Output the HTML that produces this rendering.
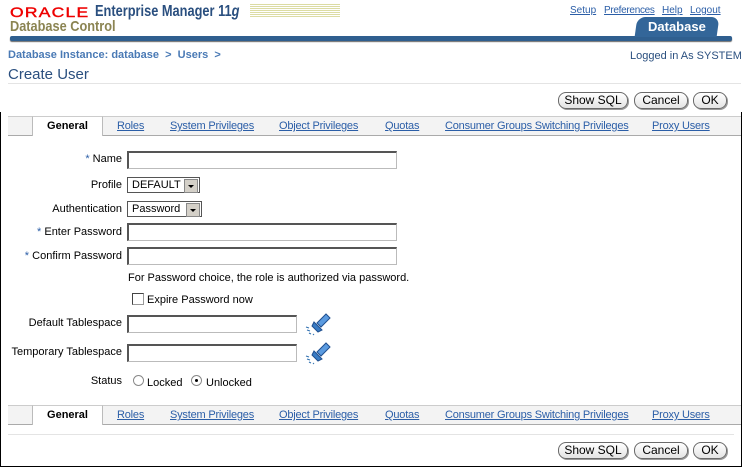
<!DOCTYPE html>
<html><head><style>
body{margin:0;width:742px;height:467px;background:#fff;position:relative;overflow:hidden;font-family:"Liberation Sans",Tahoma,sans-serif;font-size:11px;color:#000}
.a{position:absolute;white-space:nowrap}
.lk{color:#2b5ea7;text-decoration:underline}
.btn{position:absolute;height:15px;border:1px solid #6a6a6a;border-radius:8px;background:linear-gradient(#fff,#e4e4e4);font-size:12px;line-height:15px;text-align:center;box-shadow:1px 1px 0 #999}
.inp{position:absolute;height:15px;border:1px solid #bbb;border-top:2px solid #555;border-left:2px solid #555;background:#fff}
.lab{position:absolute;right:620px;white-space:nowrap;font-size:11px}
.star{color:#2b5ea7}
.tabs{position:absolute;left:8px;width:733px;height:18px;background:#f3f3f3;border-top:1px solid #ccc;border-bottom:1px solid #aaa}
.tabs .g{position:absolute;left:24px;top:-1px;width:69px;height:19px;background:#fff;border-left:1px solid #bbb;border-right:1px solid #bbb;border-top:1px solid #ccc;font-weight:bold;text-align:center;line-height:18px;font-size:11px}
.tabs span.l{position:absolute;top:3px;color:#2b5ea7;text-decoration:underline;font-size:11px;letter-spacing:-0.2px}
.sel{position:absolute;height:14px;border:1px solid #555;background:#fff;font-size:11px;line-height:14px;padding-left:4px}
.sel i{position:absolute;right:1px;top:1px;width:12px;height:12px;background:#d4d0c8;border:1px solid #888}
.sel i:after{content:"";position:absolute;left:3px;top:5px;border-left:3px solid transparent;border-right:3px solid transparent;border-top:3px solid #000}
</style></head><body>
<div class="a" style="left:0;top:112px;width:1px;height:355px;background:#000"></div>
<div class="a" style="left:741px;top:112px;width:1px;height:355px;background:#000"></div>
<div class="a" style="left:0;top:466px;width:742px;height:1px;background:#000"></div>

<div class="a" style="left:10px;top:4px;font-size:14px;color:#e00;letter-spacing:1px;-webkit-text-stroke:0.4px #e00;transform:scaleX(1.25);transform-origin:left">ORACLE</div>
<div class="a" style="left:95px;top:3px;font-size:16px;font-weight:bold;color:#2a4f7f;transform:scaleX(0.8);transform-origin:left">Enterprise Manager 11<i>g</i></div>
<div class="a" style="left:250px;top:4px;width:90px;height:13px;background:repeating-linear-gradient(#d8d89a 0 1px,#fff 1px 2px);opacity:.9"></div>
<div class="a" style="left:10px;top:18px;font-size:15px;font-weight:bold;color:#8b8452;transform:scaleX(0.85);transform-origin:left">Database Control</div>
<div class="a" style="left:10px;top:36px;width:722px;height:5px;background:#2f5f8f;border-radius:2px;box-shadow:0 1px 1px #666"></div>
<div class="a" style="left:636px;top:17px;width:82px;height:20px;background:#336699;border-radius:8px 8px 0 0;transform:skewX(-8deg)"></div>
<div class="a" style="left:648px;top:19px;font-size:13px;font-weight:bold;color:#fff">Database</div>
<div class="a lk" style="left:570px;top:5px;font-size:10px">Setup</div>
<div class="a lk" style="left:604px;top:5px;font-size:10px;letter-spacing:-0.3px">Preferences</div>
<div class="a lk" style="left:662px;top:5px;font-size:10px">Help</div>
<div class="a lk" style="left:690px;top:5px;font-size:10px">Logout</div>

<div class="a" style="left:8px;top:49px;font-weight:bold;color:#4a7ab5">Database Instance: database &nbsp;&gt;&nbsp; Users &nbsp;&gt;</div>
<div class="a" style="left:630px;top:50px;color:#2a4f7f">Logged in As SYSTEM</div>
<div class="a" style="left:8px;top:66px;font-size:15px;color:#2a4f7f">Create User</div>
<div class="a" style="left:8px;top:83px;width:733px;height:1px;background:#e4e4e4"></div>

<div class="btn" style="left:558px;top:92px;width:68px">Show SQL</div>
<div class="btn" style="left:634px;top:92px;width:52px">Cancel</div>
<div class="btn" style="left:693px;top:92px;width:32px">OK</div>

<div class="tabs" style="top:116px"><div class="g">General</div>
<span class="l" style="left:109px">Roles</span><span class="l" style="left:162px">System Privileges</span><span class="l" style="left:271px">Object Privileges</span><span class="l" style="left:377px">Quotas</span><span class="l" style="left:437px">Consumer Groups Switching Privileges</span><span class="l" style="left:644px">Proxy Users</span></div>

<div class="lab" style="top:153px"><span class="star">*</span> Name</div>
<div class="inp" style="left:127px;top:151px;width:267px"></div>
<div class="lab" style="top:179px">Profile</div>
<div class="sel" style="left:127px;top:177px;width:67px">DEFAULT<i></i></div>
<div class="lab" style="top:203px">Authentication</div>
<div class="sel" style="left:127px;top:201px;width:69px">Password<i></i></div>
<div class="lab" style="top:226px"><span class="star">*</span> Enter Password</div>
<div class="inp" style="left:127px;top:223px;width:267px"></div>
<div class="lab" style="top:250px"><span class="star">*</span> Confirm Password</div>
<div class="inp" style="left:127px;top:247px;width:267px"></div>
<div class="a" style="left:128px;top:272px">For Password choice, the role is authorized via password.</div>
<div class="a" style="left:132px;top:293px;width:10px;height:10px;border:1px solid #999;border-top-color:#444;border-left-color:#444;background:#fff"></div>
<div class="a" style="left:147px;top:294px">Expire Password now</div>
<div class="lab" style="top:317px">Default Tablespace</div>
<div class="inp" style="left:127px;top:315px;width:167px"></div>
<div class="lab" style="top:346px">Temporary Tablespace</div>
<div class="inp" style="left:127px;top:344px;width:167px"></div>
<svg class="a" style="left:305px;top:312px" width="26" height="24"><path d="M12 11 L21 2 L25 6 L16 15 Z" fill="#5b9be0" stroke="#1f4f8f"/><path d="M9 10 L17 18 L13 20 L7 14 Z" fill="#3a7cc4" stroke="#1f4f8f"/><path d="M1 15l3 1M2 18l3 1M4 21l2 1M8 22l1 1" stroke="#3070b0"/></svg>
<svg class="a" style="left:305px;top:341px" width="26" height="24"><path d="M12 11 L21 2 L25 6 L16 15 Z" fill="#5b9be0" stroke="#1f4f8f"/><path d="M9 10 L17 18 L13 20 L7 14 Z" fill="#3a7cc4" stroke="#1f4f8f"/><path d="M1 15l3 1M2 18l3 1M4 21l2 1M8 22l1 1" stroke="#3070b0"/></svg>
<div class="lab" style="top:375px">Status</div>
<div class="a" style="left:133px;top:375px;width:9px;height:9px;border:1px solid #888;border-radius:50%;background:#fff"></div>
<div class="a" style="left:147px;top:377px">Locked</div>
<div class="a" style="left:191px;top:375px;width:9px;height:9px;border:1px solid #888;border-radius:50%;background:#fff"></div>
<div class="a" style="left:195px;top:379px;width:3px;height:3px;border-radius:50%;background:#000"></div>
<div class="a" style="left:206px;top:377px">Unlocked</div>

<div class="tabs" style="top:405px"><div class="g">General</div>
<span class="l" style="left:109px">Roles</span><span class="l" style="left:162px">System Privileges</span><span class="l" style="left:271px">Object Privileges</span><span class="l" style="left:377px">Quotas</span><span class="l" style="left:437px">Consumer Groups Switching Privileges</span><span class="l" style="left:644px">Proxy Users</span></div>
<div class="a" style="left:8px;top:434px;width:726px;height:1px;background:#e4e4e4"></div>
<div class="btn" style="left:558px;top:442px;width:68px">Show SQL</div>
<div class="btn" style="left:634px;top:442px;width:52px">Cancel</div>
<div class="btn" style="left:693px;top:442px;width:32px">OK</div>
</body></html>
